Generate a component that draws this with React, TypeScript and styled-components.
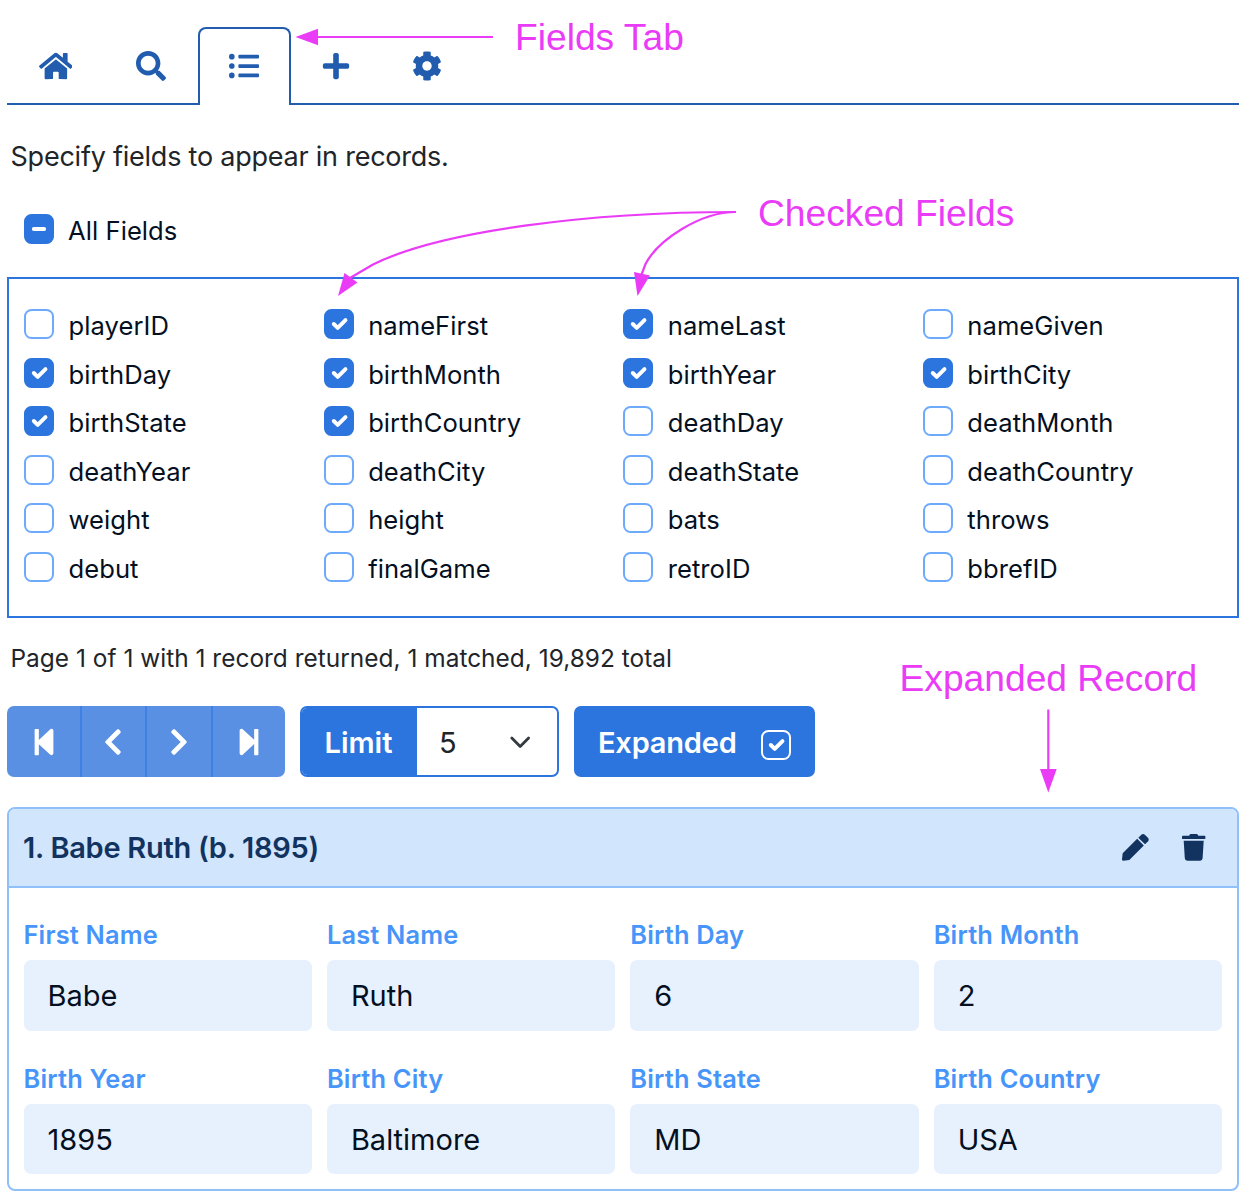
import React from "react";
import styled, { createGlobalStyle, css } from "styled-components";
import {
  FaHome,
  FaSearch,
  FaListUl,
  FaPlus,
  FaCog,
  FaStepBackward,
  FaStepForward,
  FaChevronLeft,
  FaChevronRight,
  FaPen,
  FaTrash,
} from "react-icons/fa";

const c = {
  primary: "#2c74de",
  muted: "#5990e4",
  tab: "#215cae",
  ink: "#04101f",
  body: "#212529",
  boxLine: "#6eaafb",
  cardLine: "#8fc0fa",
  cardHead: "#d1e5fd",
  cardInk: "#12335f",
  field: "#e7f1fe",
  label: "#4895fa",
  note: "#ea3cf7",
};

const GlobalStyle = createGlobalStyle`
  * { box-sizing: border-box; }
  body { margin: 0; background: #fff; overflow: hidden; }
`;

const Page = styled.main`
  position: relative;
  height: 1200px;
  padding: 27px 7px 0;
  font-family: Inter, "Liberation Sans", sans-serif;
  color: ${c.ink};
  white-space: nowrap;
`;

const Tabs = styled.nav`
  display: flex;
  height: 78px;
  color: ${c.tab};
  font-size: 30px;
`;

const Tab = styled.button<{ $w: number; $icon?: number; $active?: boolean }>`
  display: flex;
  align-items: center;
  justify-content: center;
  width: ${(p) => p.$w}px;
  padding: 2px 0 0;
  border: 0;
  border-bottom: 2px solid ${c.tab};
  background: none;
  color: inherit;
  font: inherit;
  ${(p) =>
    p.$active &&
    css`
      padding: 0 1px 2px 0;
      border: 2px solid ${c.tab};
      border-bottom: 0;
      border-radius: 8px 8px 0 0;
    `}
  svg { display: block; flex: none; width: ${(p) => p.$icon ?? 30}px; height: 30px; }
`;

const TabRest = styled.div`
  flex: 1;
  border-bottom: 2px solid ${c.tab};
`;

const Intro = styled.p`
  margin: 34px 0 0 3.5px;
  font-size: 27px;
  line-height: 36px;
  color: ${c.body};
  letter-spacing: -0.23px;
`;

const AllFields = styled.div`
  margin: 37px 0 0 16.5px;
`;

const Check = styled.label`
  display: flex;
  align-items: center;
  gap: 14.6px;
  height: 34px;
  font-size: 25.6px;
  letter-spacing: 0.04px;
`;

const CheckText = styled.span`
  padding-top: 3px;
`;

const Box = styled.span<{ $on?: boolean; $inverse?: boolean }>`
  display: block;
  flex: none;
  width: 30px;
  height: 30px;
  border: 2px solid ${(p) => (p.$inverse ? "#fff" : p.$on ? c.primary : c.boxLine)};
  border-radius: 7.5px;
  background: ${(p) => (p.$on ? c.primary : "#fff")};
  svg { display: block; }
`;

const Panel = styled.section`
  display: grid;
  grid-template-columns: repeat(4, 299.6px);
  grid-auto-rows: 48.6px;
  align-content: start;
  height: 341px;
  margin-top: 31px;
  padding: 28px 0 0 14.95px;
  border: 2px solid ${c.primary};
`;

const Status = styled.p`
  margin: 23px 0 0 3.5px;
  font-size: 24.4px;
  line-height: 34px;
  color: ${c.body};
  letter-spacing: 0.03px;
`;

const Toolbar = styled.div`
  display: flex;
  gap: 15px;
  height: 71px;
  margin-top: 31px;
  font-size: 29px;
`;

const Pager = styled.div`
  display: flex;
  width: 278px;
  border-radius: 7px;
  overflow: hidden;
  background: ${c.muted};
`;

const PagerButton = styled.button<{ $w: number }>`
  display: flex;
  align-items: center;
  justify-content: center;
  width: ${(p) => p.$w}px;
  padding: 0;
  border: 0;
  background: none;
  color: #fff;
  font-size: 30px;
  & + & { border-left: 2px solid #3f81e2; padding-right: 1px; }
  svg { display: block; flex: none; }
`;

const LimitGroup = styled.div`
  display: flex;
  width: 259px;
  border: 2px solid ${c.primary};
  border-radius: 7px;
  overflow: hidden;
`;

const LimitLabel = styled.span`
  display: flex;
  align-items: center;
  width: 115px;
  padding: 2px 0 0 22.5px;
  background: ${c.primary};
  color: #fff;
  font-weight: 560;
`;

const LimitValue = styled.span`
  display: flex;
  flex: 1;
  align-items: center;
  justify-content: space-between;
  padding: 2px 26px 0 22px;
  color: ${c.body};
`;

const Expanded = styled.button`
  display: flex;
  align-items: center;
  justify-content: space-between;
  width: 241px;
  padding: 2px 24px 0;
  border: 0;
  border-radius: 7px;
  background: ${c.primary};
  color: #fff;
  font: inherit;
  font-weight: 560;
  letter-spacing: -0.2px;
`;

const ExpandedBox = styled.span`
  padding-top: 4px;
`;

const Card = styled.article`
  height: 384px;
  margin-top: 30px;
  border: 2px solid ${c.cardLine};
  border-radius: 8px;
  overflow: hidden;
`;

const CardHead = styled.header`
  display: flex;
  align-items: center;
  height: 79px;
  padding: 0 31.5px 0 14px;
  border-bottom: 2px solid ${c.cardLine};
  background: ${c.cardHead};
  color: ${c.cardInk};
`;

const CardTitle = styled.h2`
  flex: 1;
  margin: 0;
  font-size: 29px;
  font-weight: 560;
  letter-spacing: -0.28px;
`;

const CardActions = styled.div`
  display: flex;
  gap: 33px;
  font-size: 26.7px;
  svg { display: block; }
  svg:last-child { width: 23.4px; }
`;

const CardBody = styled.div`
  display: grid;
  grid-template-columns: repeat(4, 288.4px);
  column-gap: 15px;
  row-gap: 30px;
  padding: 29px 15px 0 14.5px;
`;

const FieldLabel = styled.div`
  height: 43px;
  line-height: 35px;
  font-size: 25.4px;
  font-weight: 560;
  letter-spacing: 0.18px;
  color: ${c.label};
`;

const FieldValue = styled.div`
  height: 70.5px;
  padding-left: 24px;
  border-radius: 7px;
  background: ${c.field};
  font-size: 29px;
  line-height: 71px;
`;

const Notes = styled.div`
  position: absolute;
  inset: 0;
  pointer-events: none;
  svg { display: block; }
`;

const Note = styled.span<{ $x: number; $y: number }>`
  position: absolute;
  left: ${(p) => p.$x}px;
  top: ${(p) => p.$y}px;
  font: 37.2px/44px "Liberation Sans", Arial, sans-serif;
  color: ${c.note};
`;

const Mark = ({ d }: { d: string }) => (
  <svg width="26" height="26" viewBox="0 0 20 20" fill="none" stroke="#fff" strokeWidth="3" strokeLinecap="round" strokeLinejoin="round">
    <path d={d} />
  </svg>
);
const TICK = "M6 10l3 3l6-6";
const DASH = "M6 10h8";

const fields: [string, boolean][] = [
  ["playerID", false], ["nameFirst", true], ["nameLast", true], ["nameGiven", false],
  ["birthDay", true], ["birthMonth", true], ["birthYear", true], ["birthCity", true],
  ["birthState", true], ["birthCountry", true], ["deathDay", false], ["deathMonth", false],
  ["deathYear", false], ["deathCity", false], ["deathState", false], ["deathCountry", false],
  ["weight", false], ["height", false], ["bats", false], ["throws", false],
  ["debut", false], ["finalGame", false], ["retroID", false], ["bbrefID", false],
];

const record = [
  ["First Name", "Babe"], ["Last Name", "Ruth"], ["Birth Day", "6"], ["Birth Month", "2"],
  ["Birth Year", "1895"], ["Birth City", "Baltimore"], ["Birth State", "MD"], ["Birth Country", "USA"],
];

export default function App() {
  return (
    <Page>
      <GlobalStyle />
      <Tabs>
        <Tab $w={97} $icon={33.75}><FaHome /></Tab>
        <Tab $w={94}><FaSearch /></Tab>
        <Tab $w={93} $active><FaListUl /></Tab>
        <Tab $w={90}><FaPlus /></Tab>
        <Tab $w={92}><FaCog /></Tab>
        <TabRest />
      </Tabs>
      <Intro>Specify fields to appear in records.</Intro>
      <AllFields>
        <Check>
          <Box $on><Mark d={DASH} /></Box>
          <CheckText>All Fields</CheckText>
        </Check>
      </AllFields>
      <Panel>
        {fields.map(([name, on]) => (
          <Check key={name}>
            <Box $on={on}>{on && <Mark d={TICK} />}</Box>
            <CheckText>{name}</CheckText>
          </Check>
        ))}
      </Panel>
      <Status>Page 1 of 1 with 1 record returned, 1 matched, 19,892 total</Status>
      <Toolbar>
        <Pager>
          <PagerButton $w={73}><FaStepBackward /></PagerButton>
          <PagerButton $w={65}><FaChevronLeft /></PagerButton>
          <PagerButton $w={66}><FaChevronRight /></PagerButton>
          <PagerButton $w={74}><FaStepForward /></PagerButton>
        </Pager>
        <LimitGroup>
          <LimitLabel>Limit</LimitLabel>
          <LimitValue>
            5
            <svg width="22.4" height="22.4" viewBox="0 0 16 16" fill="none" stroke="#343a40" strokeWidth="2" strokeLinecap="round" strokeLinejoin="round">
              <path d="m2 5 6 6 6-6" />
            </svg>
          </LimitValue>
        </LimitGroup>
        <Expanded>
          Expanded
          <ExpandedBox><Box $on $inverse><Mark d={TICK} /></Box></ExpandedBox>
        </Expanded>
      </Toolbar>
      <Card>
        <CardHead>
          <CardTitle>1. Babe Ruth (b. 1895)</CardTitle>
          <CardActions><FaPen /><FaTrash /></CardActions>
        </CardHead>
        <CardBody>
          {record.map(([label, value]) => (
            <div key={label}>
              <FieldLabel>{label}</FieldLabel>
              <FieldValue>{value}</FieldValue>
            </div>
          ))}
        </CardBody>
      </Card>
      <Notes>
        <svg width="1246" height="1200" fill="none" stroke={c.note} strokeWidth="2.2">
          <path d="M493 37H316" />
          <path d="M736 212C590 212 440 231 373 264.500L350 278" />
          <path d="M736 212C700 212 658 240 645.500 264L641 276" />
          <path d="M1048.300 709.500V772" />
          <g fill={c.note} stroke="none">
            <path d="M295.500 37L318 28.700V45.300Z" />
            <path d="M338 296L344.500 273L357.500 282.500Z" />
            <path d="M637.500 296L634 272L650 275.500Z" />
            <path d="M1048.300 792.500L1040 769H1056.700Z" />
          </g>
        </svg>
        <Note $x={515} $y={15}>Fields Tab</Note>
        <Note $x={758} $y={191}>Checked Fields</Note>
        <Note $x={899.500} $y={656}>Expanded Record</Note>
      </Notes>
    </Page>
  );
}
